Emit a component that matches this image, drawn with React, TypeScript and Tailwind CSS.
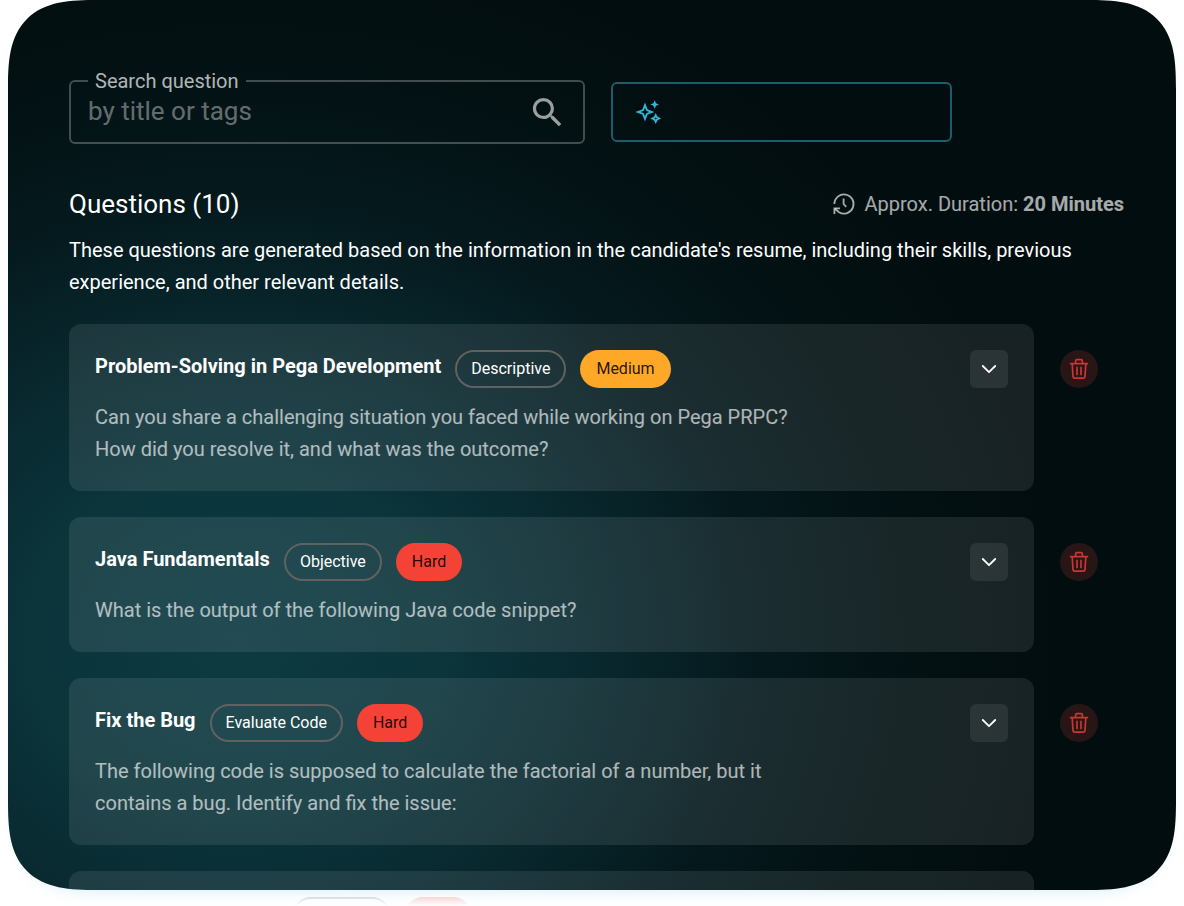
import React from "react";
import { MdSearch } from "react-icons/md";

type Level = "Medium" | "Hard";

interface Question {
  title: string;
  kind: string;
  level: Level;
  text: string;
}

const questions: Question[] = [
  {
    title: "Problem-Solving in Pega Development",
    kind: "Descriptive",
    level: "Medium",
    text: "Can you share a challenging situation you faced while working on Pega PRPC? How did you resolve it, and what was the outcome?",
  },
  {
    title: "Java Fundamentals",
    kind: "Objective",
    level: "Hard",
    text: "What is the output of the following Java code snippet?",
  },
  {
    title: "Fix the Bug",
    kind: "Evaluate Code",
    level: "Hard",
    text: "The following code is supposed to calculate the factorial of a number, but it contains a bug. Identify and fix the issue:",
  },
];

const levelColors: Record<Level, string> = {
  Medium: "bg-[#ffa726]",
  Hard: "bg-[#f44336]",
};

function SparklesIcon() {
  return (
    <svg viewBox="0 0 26 26" className="size-[26px]" fill="none" stroke="currentColor" strokeWidth="1.9" strokeLinejoin="miter">
      <path d="M9 6.2 L10.9 11.1 L15.8 13 L10.9 14.9 L9 19.8 L7.1 14.9 L2.2 13 L7.1 11.1 Z" />
      <path d="M18.7 1.2 L20 4.2 L23 5.5 L20 6.8 L18.7 9.8 L17.4 6.8 L14.4 5.5 L17.4 4.2 Z" fill="currentColor" stroke="none" />
      <path d="M19.7 16.2 L20.8 18.4 L23 19.5 L20.8 20.6 L19.7 22.8 L18.6 20.6 L16.4 19.5 L18.6 18.4 Z" />
    </svg>
  );
}

function HistoryIcon() {
  return (
    <svg viewBox="0 0 24 24" className="size-6" fill="none" stroke="currentColor" strokeWidth="1.8">
      <path d="M2.4 12 A9.6 9.6 0 1 1 7 20.2 L3 16.8" />
      <path d="M2.4 22 V16.4 H8" />
      <path d="M11.6 6.6 V12 L14.2 14.8" />
    </svg>
  );
}

function TrashIcon() {
  return (
    <svg viewBox="0 0 22 22" className="size-[22px]" fill="none" stroke="currentColor" strokeWidth="1.7" strokeLinecap="round" strokeLinejoin="round">
      <path d="M2.6 5.6 H19.4" />
      <path d="M7.6 5.4 V2.9 Q7.6 1.7 8.8 1.7 H13.2 Q14.4 1.7 14.4 2.9 V5.4" />
      <path d="M4.2 5.8 L5 18.6 Q5.1 20.2 6.7 20.2 H15.3 Q16.9 20.2 17 18.6 L17.8 5.8" />
      <path d="M9 9.4 V16.4 M13 9.4 V16.4" />
    </svg>
  );
}

function ChevronIcon() {
  return (
    <svg viewBox="0 0 20 20" className="size-5" fill="none" stroke="currentColor" strokeWidth="1.8" strokeLinecap="round" strokeLinejoin="round">
      <path d="M3.8 7 L10 13.2 L16.2 7" />
    </svg>
  );
}

function QuestionRow({ question }: { question: Question }) {
  return (
    <li className="flex items-start gap-[26px] pr-[26px]">
      <article className="min-w-0 flex-1 rounded-xl bg-white/9 p-[26px]">
        <div className="flex items-start gap-[14px]">
          <h2 className="text-[20px] leading-8 font-bold">{question.title}</h2>
          <span className="flex h-[38px] items-center rounded-full border-2 border-[#616161] px-3.5 text-base">{question.kind}</span>
          <span className={`flex h-[38px] items-center rounded-full px-4 text-base text-black/87 ${levelColors[question.level]}`}>
            {question.level}
          </span>
          <button type="button" aria-label={`Expand ${question.title}`} className="ml-auto flex size-[38px] items-center justify-center rounded-md bg-white/8">
            <ChevronIcon />
          </button>
        </div>
        <p className="mt-[13px] max-w-[720px] text-[20px] leading-8 text-white/65">{question.text}</p>
      </article>
      <button
        type="button"
        aria-label={`Delete ${question.title}`}
        className="mt-[26px] flex size-[38px] shrink-0 items-center justify-center rounded-full bg-[#f44336]/16 text-[#c93634]"
      >
        <TrashIcon />
      </button>
    </li>
  );
}

export default function App() {
  return (
    <div className="flex h-screen flex-col overflow-hidden bg-white font-['Roboto',sans-serif] text-white">
      <main className="mx-2 min-h-0 flex-1 overflow-hidden rounded-[68px] bg-[#020d0f] bg-[radial-gradient(ellipse_820px_700px_at_230px_640px,#0d3a42_0%,#0b343b_25%,#08272d_45%,#05191d_63%,#031214_80%,#020d0f_100%)] pt-[68px] pr-[52px] pl-[61px] shadow-[0_10px_16px_-10px_rgba(80,180,220,0.25)] supports-[corner-shape:squircle]:rounded-[90px] supports-[corner-shape:squircle]:[corner-shape:superellipse(1.55)]">
        <div className="flex items-end gap-[26px]">
          <fieldset className="min-w-0 max-w-[516px] flex-1 rounded-md border-2 border-white/25 pr-4 pb-3 pl-[17px]">
            <legend className="px-[7px] text-[20px] leading-[26px] text-white/70">
              <label htmlFor="search">Search question</label>
            </legend>
            <div className="flex h-9 items-center">
              <input id="search" type="search" placeholder="by title or tags" className="h-[34px] min-w-0 flex-1 self-start bg-transparent text-[26px] outline-none placeholder:text-white/40" />
              <button type="button" aria-label="Search" className="text-white/60">
                <MdSearch size={39} />
              </button>
            </div>
          </fieldset>
          <button type="button" aria-label="Generate questions" className="mb-0.5 flex h-[60px] w-[341px] items-center rounded-md border-2 border-[#1d5c6b] pr-6 pl-[23px] text-[#33b5d4]">
            <SparklesIcon />
          </button>
        </div>

        <div className="mt-[42px] flex items-center justify-between">
          <h1 className="text-[26px] leading-9">Questions (10)</h1>
          <p className="flex items-center gap-2 text-[20px] leading-9 text-white/65">
            <HistoryIcon />
            <span>
              Approx. Duration: <strong>20 Minutes</strong>
            </span>
          </p>
        </div>
        <p className="mt-3 text-[20px] leading-8">
          These questions are generated based on the information in the candidate's resume, including their skills, previous experience, and other relevant details.
        </p>

        <ul className="mt-[26px] flex flex-col gap-[26px]">
          {questions.map((q) => (
            <QuestionRow key={q.title} question={q} />
          ))}
          <li className="flex pr-[90px]">
            <div className="h-[167px] flex-1 rounded-xl bg-white/9" />
          </li>
        </ul>
      </main>
      <div
        aria-hidden="true"
        className="flex h-4 shrink-0 gap-[13px] overflow-hidden pt-[7px] pl-[292px] opacity-25 [mask-image:linear-gradient(to_bottom,black_30%,transparent)]"
      >
        <span className="h-[38px] w-[99px] rounded-full border-2 border-[#616161]" />
        <span className="h-[38px] w-[68px] rounded-full bg-[#f44336]" />
      </div>
    </div>
  );
}
